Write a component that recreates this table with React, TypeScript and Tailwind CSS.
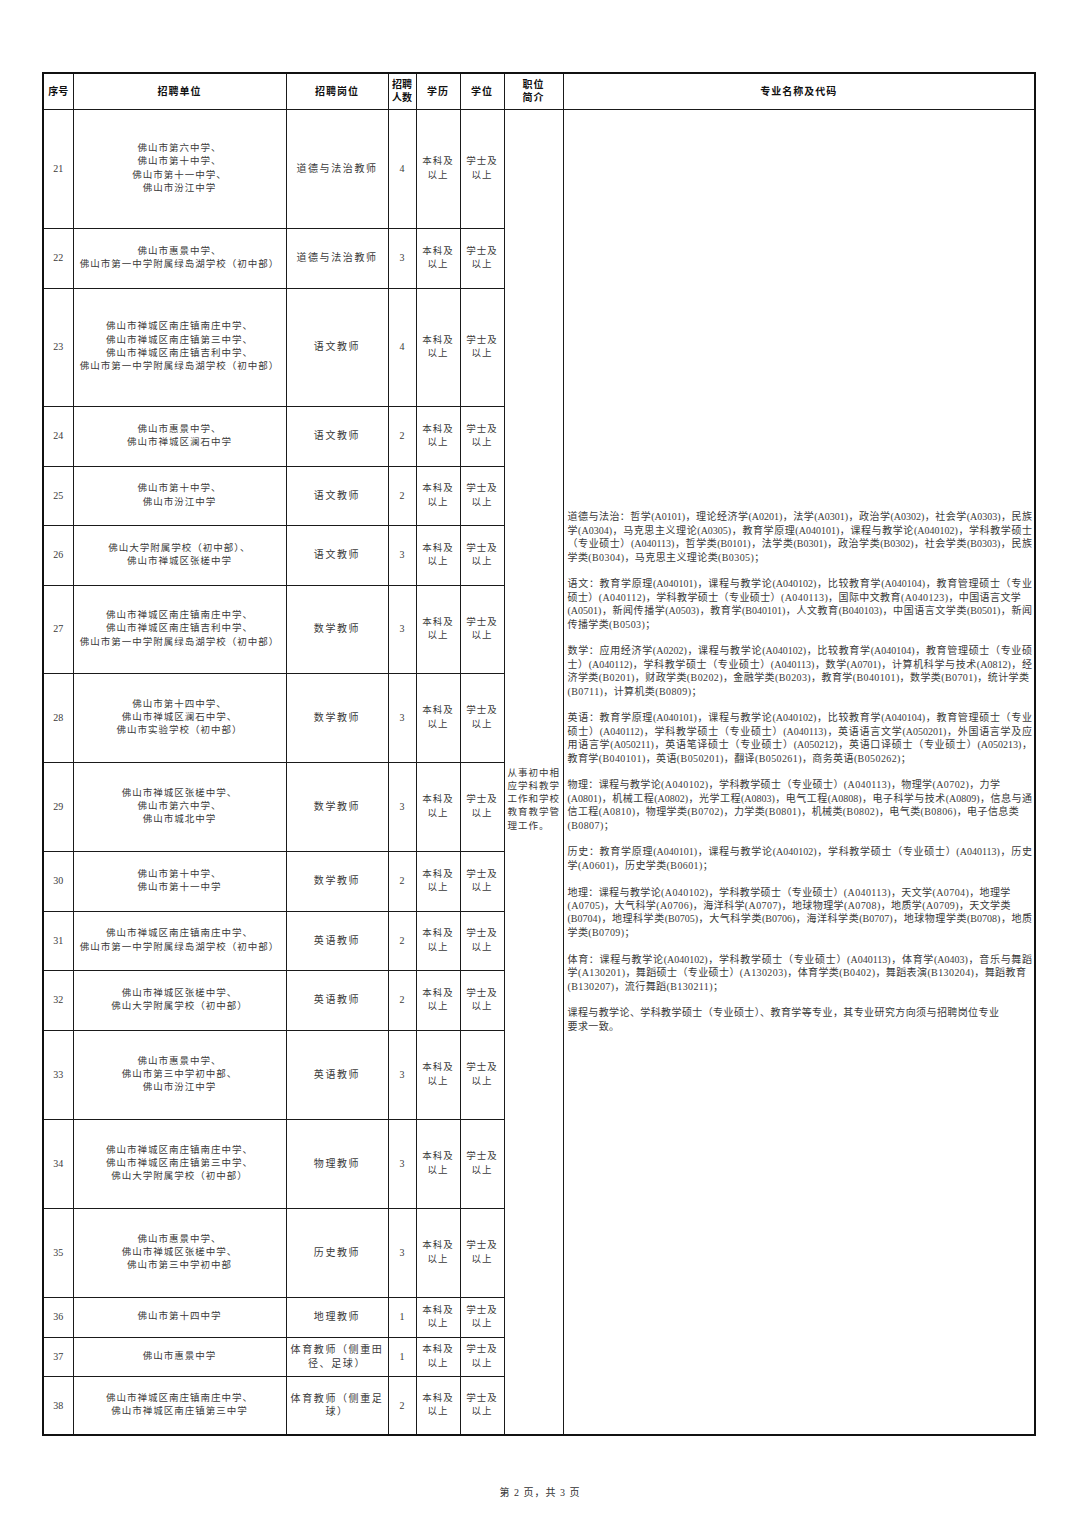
import React from 'react';

type Row = {
  no: number;
  units: string[];
  post: string[];
  count: number;
  h: number;
};

const rows: Row[] = [
  { no: 21, units: ['佛山市第六中学、', '佛山市第十中学、', '佛山市第十一中学、', '佛山市汾江中学'], post: ['道德与法治教师'], count: 4, h: 119 },
  { no: 22, units: ['佛山市惠景中学、', '佛山市第一中学附属绿岛湖学校（初中部）'], post: ['道德与法治教师'], count: 3, h: 60 },
  { no: 23, units: ['佛山市禅城区南庄镇南庄中学、', '佛山市禅城区南庄镇第三中学、', '佛山市禅城区南庄镇吉利中学、', '佛山市第一中学附属绿岛湖学校（初中部）'], post: ['语文教师'], count: 4, h: 118 },
  { no: 24, units: ['佛山市惠景中学、', '佛山市禅城区澜石中学'], post: ['语文教师'], count: 2, h: 60 },
  { no: 25, units: ['佛山市第十中学、', '佛山市汾江中学'], post: ['语文教师'], count: 2, h: 59 },
  { no: 26, units: ['佛山大学附属学校（初中部）、', '佛山市禅城区张槎中学'], post: ['语文教师'], count: 3, h: 60 },
  { no: 27, units: ['佛山市禅城区南庄镇南庄中学、', '佛山市禅城区南庄镇吉利中学、', '佛山市第一中学附属绿岛湖学校（初中部）'], post: ['数学教师'], count: 3, h: 88 },
  { no: 28, units: ['佛山市第十四中学、', '佛山市禅城区澜石中学、', '佛山市实验学校（初中部）'], post: ['数学教师'], count: 3, h: 89 },
  { no: 29, units: ['佛山市禅城区张槎中学、', '佛山市第六中学、', '佛山市城北中学'], post: ['数学教师'], count: 3, h: 89 },
  { no: 30, units: ['佛山市第十中学、', '佛山市第十一中学'], post: ['数学教师'], count: 2, h: 60 },
  { no: 31, units: ['佛山市禅城区南庄镇南庄中学、', '佛山市第一中学附属绿岛湖学校（初中部）'], post: ['英语教师'], count: 2, h: 59 },
  { no: 32, units: ['佛山市禅城区张槎中学、', '佛山大学附属学校（初中部）'], post: ['英语教师'], count: 2, h: 60 },
  { no: 33, units: ['佛山市惠景中学、', '佛山市第三中学初中部、', '佛山市汾江中学'], post: ['英语教师'], count: 3, h: 89 },
  { no: 34, units: ['佛山市禅城区南庄镇南庄中学、', '佛山市禅城区南庄镇第三中学、', '佛山大学附属学校（初中部）'], post: ['物理教师'], count: 3, h: 89 },
  { no: 35, units: ['佛山市惠景中学、', '佛山市禅城区张槎中学、', '佛山市第三中学初中部'], post: ['历史教师'], count: 3, h: 89 },
  { no: 36, units: ['佛山市第十四中学'], post: ['地理教师'], count: 1, h: 40 },
  { no: 37, units: ['佛山市惠景中学'], post: ['体育教师（侧重田', '径、足球）'], count: 1, h: 39 },
  { no: 38, units: ['佛山市禅城区南庄镇南庄中学、', '佛山市禅城区南庄镇第三中学'], post: ['体育教师（侧重足', '球）'], count: 2, h: 59 },
];

// [line, fills the full width]
const majors: [string, boolean][][] = [
  [
    ['道德与法治：哲学(A0101)，理论经济学(A0201)，法学(A0301)，政治学(A0302)，社会学(A0303)，民族', true],
    ['学(A0304)，马克思主义理论(A0305)，教育学原理(A040101)，课程与教学论(A040102)，学科教学硕士', true],
    ['（专业硕士）(A040113)，哲学类(B0101)，法学类(B0301)，政治学类(B0302)，社会学类(B0303)，民族', true],
    ['学类(B0304)，马克思主义理论类(B0305)；', false],
  ],
  [
    ['语文：教育学原理(A040101)，课程与教学论(A040102)，比较教育学(A040104)，教育管理硕士（专业', true],
    ['硕士）(A040112)，学科教学硕士（专业硕士）(A040113)，国际中文教育(A040123)，中国语言文学', false],
    ['(A0501)，新闻传播学(A0503)，教育学(B040101)，人文教育(B040103)，中国语言文学类(B0501)，新闻', true],
    ['传播学类(B0503)；', false],
  ],
  [
    ['数学：应用经济学(A0202)，课程与教学论(A040102)，比较教育学(A040104)，教育管理硕士（专业硕', true],
    ['士）(A040112)，学科教学硕士（专业硕士）(A040113)，数学(A0701)，计算机科学与技术(A0812)，经', true],
    ['济学类(B0201)，财政学类(B0202)，金融学类(B0203)，教育学(B040101)，数学类(B0701)，统计学类', false],
    ['(B0711)，计算机类(B0809)；', false],
  ],
  [
    ['英语：教育学原理(A040101)，课程与教学论(A040102)，比较教育学(A040104)，教育管理硕士（专业', true],
    ['硕士）(A040112)，学科教学硕士（专业硕士）(A040113)，英语语言文学(A050201)，外国语言学及应', true],
    ['用语言学(A050211)，英语笔译硕士（专业硕士）(A050212)，英语口译硕士（专业硕士）(A050213)，', true],
    ['教育学(B040101)，英语(B050201)，翻译(B050261)，商务英语(B050262)；', false],
  ],
  [
    ['物理：课程与教学论(A040102)，学科教学硕士（专业硕士）(A040113)，物理学(A0702)，力学', false],
    ['(A0801)，机械工程(A0802)，光学工程(A0803)，电气工程(A0808)，电子科学与技术(A0809)，信息与通', true],
    ['信工程(A0810)，物理学类(B0702)，力学类(B0801)，机械类(B0802)，电气类(B0806)，电子信息类', false],
    ['(B0807)；', false],
  ],
  [
    ['历史：教育学原理(A040101)，课程与教学论(A040102)，学科教学硕士（专业硕士）(A040113)，历史', true],
    ['学(A0601)，历史学类(B0601)；', false],
  ],
  [
    ['地理：课程与教学论(A040102)，学科教学硕士（专业硕士）(A040113)，天文学(A0704)，地理学', false],
    ['(A0705)，大气科学(A0706)，海洋科学(A0707)，地球物理学(A0708)，地质学(A0709)，天文学类', false],
    ['(B0704)，地理科学类(B0705)，大气科学类(B0706)，海洋科学类(B0707)，地球物理学类(B0708)，地质', true],
    ['学类(B0709)；', false],
  ],
  [
    ['体育：课程与教学论(A040102)，学科教学硕士（专业硕士）(A040113)，体育学(A0403)，音乐与舞蹈', true],
    ['学(A130201)，舞蹈硕士（专业硕士）(A130203)，体育学类(B0402)，舞蹈表演(B130204)，舞蹈教育', false],
    ['(B130207)，流行舞蹈(B130211)；', false],
  ],
  [
    ['课程与教学论、学科教学硕士（专业硕士）、教育学等专业，其专业研究方向须与招聘岗位专业', false],
    ['要求一致。', false],
  ],
];

const font = "font-['Liberation_Serif','Noto_Sans_CJK_SC',serif]";
const cell = 'border border-[#1a1a1a] p-0 align-middle text-center';

export default function App() {
  return (
    <div className={`w-[1080px] h-[1527px] bg-white text-[#3a3a3a] ${font}`}>
      <div className="pl-[42px] pt-[72px]">
        <table className="table-fixed border-collapse border-2 border-[#111] w-[994px]">
          <colgroup>
            <col className="w-[30px]" />
            <col className="w-[213px]" />
            <col className="w-[102px]" />
            <col className="w-[28px]" />
            <col className="w-[44px]" />
            <col className="w-[44px]" />
            <col className="w-[59px]" />
            <col className="w-[472px]" />
          </colgroup>
          <thead>
            <tr className="h-[36px] text-[10px] font-bold text-[#111] leading-[13px]">
              <th className={cell}>序号</th>
              <th className={`${cell} tracking-[1px]`}>招聘单位</th>
              <th className={`${cell} tracking-[1px]`}>招聘岗位</th>
              <th className={cell}>
                招聘
                <br />
                人数
              </th>
              <th className={`${cell} tracking-[1px]`}>学历</th>
              <th className={`${cell} tracking-[1px]`}>学位</th>
              <th className={`${cell} tracking-[1px]`}>
                职位
                <br />
                简介
              </th>
              <th className={`${cell} tracking-[1px]`}>专业名称及代码</th>
            </tr>
          </thead>
          <tbody>
            {rows.map((r, i) => (
              <tr key={r.no} style={{ height: r.h }} className="text-[9.5px] leading-[13.3px]">
                <td className={`${cell} text-[10px]`}>{r.no}</td>
                <td className={`${cell} tracking-[1px]`}>
                  {r.units.map((u) => (
                    <div key={u}>{u}</div>
                  ))}
                </td>
                <td className={`${cell} text-[10px] tracking-[1.6px] px-[2px]`}>
                  {r.post.map((p) => (
                    <div key={p}>{p}</div>
                  ))}
                </td>
                <td className={`${cell} text-[10px]`}>{r.count}</td>
                <td className={`${cell} tracking-[1px]`}>
                  <div>本科及</div>
                  <div>以上</div>
                </td>
                <td className={`${cell} tracking-[1px]`}>
                  <div>学士及</div>
                  <div>以上</div>
                </td>
                {i === 0 && (
                  <>
                    <td rowSpan={rows.length} className={`${cell} text-left pl-[3px] pt-[56px] tracking-[1px]`}>
                      <div>从事初中相</div>
                      <div>应学科教学</div>
                      <div>工作和学校</div>
                      <div>教育教学管</div>
                      <div>理工作。</div>
                    </td>
                    <td rowSpan={rows.length} className={`${cell} text-left pl-[4px] pr-[2px] text-[10px]`}>
                      <div className="flex flex-col gap-[13.4px] leading-[13.4px]">
                        {majors.map((para, pi) => (
                          <div key={pi}>
                            {para.map(([line, full]) => (
                              <div
                                key={line}
                                className={
                                  full
                                    ? 'whitespace-nowrap text-justify [text-align-last:justify]'
                                    : 'whitespace-nowrap tracking-[0.4px]'
                                }
                              >
                                {line}
                              </div>
                            ))}
                          </div>
                        ))}
                      </div>
                    </td>
                  </>
                )}
              </tr>
            ))}
          </tbody>
        </table>
      </div>
      <div className="mt-[49px] text-center text-[10px] text-[#333] tracking-[1px]">
        第 2 页，共 3 页
      </div>
    </div>
  );
}
